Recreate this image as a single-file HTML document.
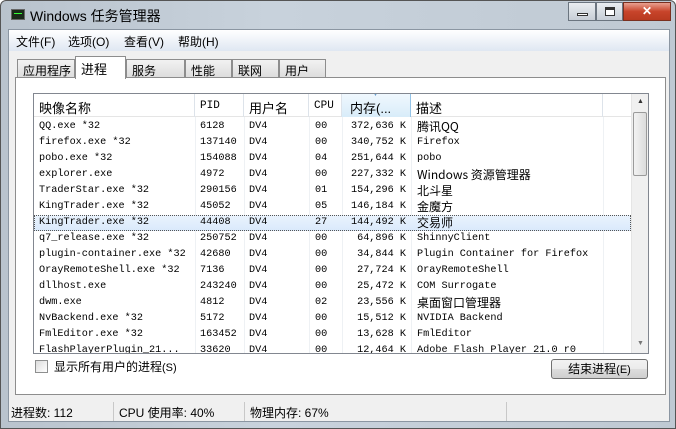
<!DOCTYPE html>
<html><head><meta charset="utf-8"><style>
*{margin:0;padding:0;box-sizing:border-box}
body{width:676px;height:429px;overflow:hidden;background:#fff;font-family:"Liberation Sans","Noto Sans CJK SC",sans-serif;font-size:12px;position:relative}
.frame{position:absolute;left:0;top:0;width:676px;height:429px;background:linear-gradient(90deg,#b9c3cd,#c8d2dc 40%,#bfc9d3);border:1px solid #555;border-radius:6px 6px 0 0}
.title{position:absolute;left:29px;top:5px;font-size:14px;color:#000}
.ico{position:absolute;left:10px;top:8px;width:14px;height:11px;background:#1a2a1a;border:1px solid #666}
.ico:after{content:"";position:absolute;left:2px;top:3px;width:8px;height:3px;border-top:1px solid #3f3}
.btn{position:absolute;top:1px;height:19px;border:1px solid #6b7580;background:linear-gradient(#e9edf1,#c7ced6)}
.close{background:linear-gradient(#e8a090,#c8442a 50%,#b83a20);border-color:#7a3020;color:#fff;font-weight:bold;text-align:center;font-size:12px;line-height:17px}
.inner{position:absolute;left:7px;top:28px;width:662px;height:393px;background:#f0f0f0;border:1px solid #8b96a2}
.menu{position:absolute;left:0;top:0;width:660px;height:21px;background:linear-gradient(#fff,#dfe7f2);font-size:12px}
.menu span{position:absolute;top:3px}
.tab{position:absolute;top:29px;height:19px;border:1px solid #8d8d8d;border-bottom:none;background:linear-gradient(#f2f2f2,#dcdcdc);font-size:12px;padding:2px 0 0 5px}
.tab.act{top:26px;height:23px;background:#fff;z-index:2;font-size:13px}
.panel{position:absolute;left:6px;top:47px;width:651px;height:318px;background:#fff;border:1px solid #8d8d8d}
.list{position:absolute;left:24px;top:63px;width:616px;height:261px;border:1px solid #828790;background:#fff;overflow:hidden}
.hdr{position:absolute;left:0;top:0;height:23px;width:597px;background:#fff;border-bottom:1px solid #e5e5e5}
.hdr div{position:absolute;top:0;height:23px;border-right:1px solid #dde3ea;padding:4px 0 0 5px;font-size:13px}
.mono{font-family:"Liberation Mono","Noto Sans CJK SC",monospace;font-size:10.2px}
.hdr .mono{font-size:11px;padding-top:6px}
.row{position:absolute;left:0;height:16px;width:597px;white-space:pre;line-height:14px}
.row span{position:absolute;top:1px;height:14px;overflow:hidden}
.cj{font-family:"Noto Sans CJK SC",sans-serif;font-size:12px}
.sel{background:linear-gradient(#eaf3fd,#d9e9fb);outline:1px dotted #555;outline-offset:-1px}
.vline{position:absolute;top:23px;bottom:0;width:1px;background:#eef1f4}
.sb{position:absolute;left:597px;top:0;width:17px;height:259px;background:#f0f0f0;border-left:1px solid #e5e5e5}
.thumb{position:absolute;left:1px;top:18px;width:14px;height:64px;border:1px solid #9a9a9a;border-radius:2px;background:linear-gradient(90deg,#f2f2f2,#dcdcdc)}
.status{position:absolute;left:0;top:371px;width:660px;height:21px;font-size:12px}
.status span{position:absolute;top:3px}
.sd{position:absolute;top:1px;width:1px;height:19px;background:#c8c8c8}
</style></head><body>
<div class="frame">
<div class="ico"></div>
<div class="title">Windows 任务管理器</div>
<div class="btn" style="left:567px;width:28px"><div style="position:absolute;left:8px;top:10px;width:11px;height:3px;border:1px solid #333;background:#fff"></div></div>
<div class="btn" style="left:595px;width:27px"><div style="position:absolute;left:8px;top:4px;width:10px;height:9px;border:1px solid #333;border-top-width:3px;background:#fff"></div></div>
<div class="btn close" style="left:622px;width:48px">✕</div>
<div class="inner">
<div class="menu"><span style="left:7px">文件(F)</span><span style="left:59px">选项(O)</span><span style="left:115px">查看(V)</span><span style="left:169px">帮助(H)</span></div>
<div class="tab" style="left:8px;width:58px">应用程序</div>
<div class="tab act" style="left:66px;width:51px">进程</div>
<div class="tab" style="left:117px;width:59px">服务</div>
<div class="tab" style="left:176px;width:47px">性能</div>
<div class="tab" style="left:223px;width:47px">联网</div>
<div class="tab" style="left:270px;width:47px">用户</div>
<div class="panel"></div>
<div class="list">
<div class="hdr">
<div style="left:0;width:161px;padding-left:5px">映像名称</div>
<div class="mono" style="left:161px;width:49px">PID</div>
<div style="left:210px;width:65px">用户名</div>
<div class="mono" style="left:275px;width:33px">CPU</div>
<div style="left:308px;width:69px;background:linear-gradient(#f0f8fe,#d8ecf9);border-right:1px solid #94c4e8;padding-left:8px">内存(...<span style="position:absolute;left:30px;top:-3px;color:#6aa0d0;font-size:7px">▼</span></div>
<div style="left:377px;width:192px">描述</div>
</div>
<div class="vline" style="left:161px"></div><div class="vline" style="left:210px"></div><div class="vline" style="left:275px"></div><div class="vline" style="left:308px"></div><div class="vline" style="left:377px"></div><div class="vline" style="left:569px"></div>
<div class="mono" id="rows"></div>
<div class="sb"><div style="position:absolute;left:5px;top:4px;font-size:7px;color:#333">▲</div><div class="thumb"></div><div style="position:absolute;left:5px;top:246px;font-size:7px;color:#777">▼</div></div>
</div>
<div style="position:absolute;left:26px;top:330px;width:13px;height:13px;border:1px solid #8e8f8f;background:linear-gradient(135deg,#dcdcdc,#fff)"></div>
<div style="position:absolute;left:45px;top:328px;font-size:12px">显示所有用户的进程<span style="font-size:11px">(S)</span></div>
<div style="position:absolute;left:542px;top:329px;width:97px;height:20px;border:1px solid #707070;border-radius:3px;background:linear-gradient(#f2f2f2,#ebebeb 50%,#dddddd 50%,#cfcfcf);text-align:center;font-size:12px;line-height:18px">结束进程<span style="font-size:11px">(E)</span></div>
<div class="status"><span style="left:2px">进程数: 112</span><div class="sd" style="left:104px"></div><span style="left:110px">CPU 使用率: 40%</span><div class="sd" style="left:235px"></div><span style="left:241px">物理内存: 67%</span><div class="sd" style="left:497px"></div></div>
</div>
</div>
<script>
var d=[["QQ.exe *32","6128","00","372,636 K","腾讯QQ",1],["firefox.exe *32","137140","00","340,752 K","Firefox"],["pobo.exe *32","154088","04","251,644 K","pobo"],["explorer.exe","4972","00","227,332 K","Windows 资源管理器",1],["TraderStar.exe *32","290156","01","154,296 K","北斗星",1],["KingTrader.exe *32","45052","05","146,184 K","金魔方",1],["KingTrader.exe *32","44408","27","144,492 K","交易师",1],["q7_release.exe *32","250752","00","64,896 K","ShinnyClient"],["plugin-container.exe *32","42680","00","34,844 K","Plugin Container for Firefox"],["OrayRemoteShell.exe *32","7136","00","27,724 K","OrayRemoteShell"],["dllhost.exe","243240","00","25,472 K","COM Surrogate"],["dwm.exe","4812","02","23,556 K","桌面窗口管理器",1],["NvBackend.exe *32","5172","00","15,512 K","NVIDIA Backend"],["FmlEditor.exe *32","163452","00","13,628 K","FmlEditor"],["FlashPlayerPlugin_21...","33620","00","12,464 K","Adobe Flash Player 21.0 r0"]];
var h="";d.forEach(function(r,i){var t=25+i*16;h+='<div class="row'+(i==6?' sel':'')+'" style="top:'+t+'px"><span style="left:5px">'+r[0]+'</span><span style="left:166px">'+r[1]+'</span><span style="left:215px">DV4</span><span style="left:281px">'+r[2]+'</span><span style="left:308px;width:64px;text-align:right">'+r[3]+'</span><span'+(r[5]?' class="cj"':'')+' style="left:383px">'+r[4]+'</span></div>';});
document.getElementById("rows").innerHTML=h;
</script>
</body></html>
